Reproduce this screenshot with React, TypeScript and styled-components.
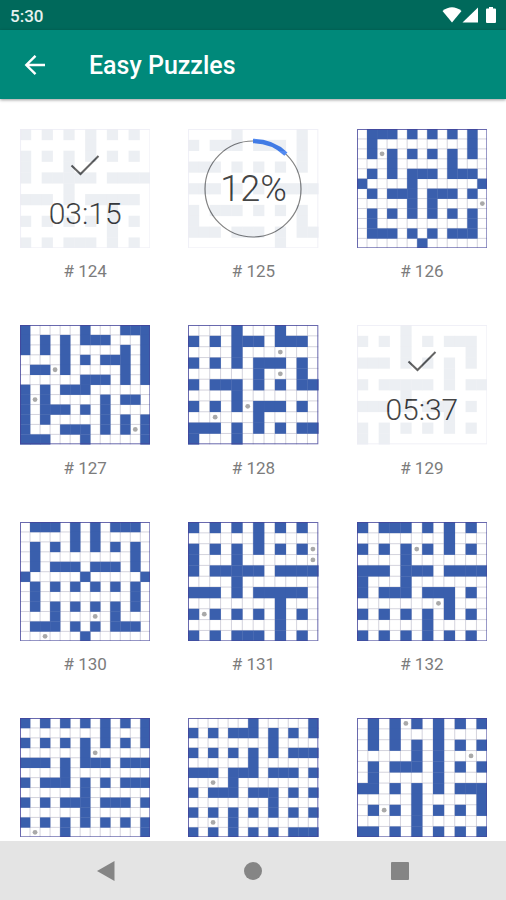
import React from "react";
import styled, { createGlobalStyle } from "styled-components";

const GlobalStyle = createGlobalStyle`
  * { box-sizing: border-box; }
  body { margin: 0; background: #fff; font-family: Roboto, "Open Sans", sans-serif; }
  button { font: inherit; border: 0; padding: 0; background: none; cursor: pointer; }
`;

const Screen = styled.div`
  display: flex;
  flex-direction: column;
  height: 100vh;
`;

const StatusBar = styled.div`
  display: flex;
  align-items: center;
  justify-content: space-between;
  flex: none;
  height: 30px;
  padding: 2px 8px 0 10px;
  background: #00695b;
  color: #e6f1ef;
  font-size: 17px;
  line-height: 28px;
  font-weight: 500;
`;

const StatusIcons = styled.div`
  display: flex;
  align-items: center;
`;

const AppBar = styled.header`
  display: flex;
  align-items: center;
  gap: 36px;
  flex: none;
  height: 69px;
  padding: 2px 17px 0;
  background: #00897a;
  color: #fff;
  box-shadow: 0 1px 3px rgba(0, 0, 0, 0.4);
  z-index: 1;
`;

const IconButton = styled.button`
  display: flex;
  align-items: center;
  justify-content: center;
  width: 36px;
  height: 36px;
  color: inherit;
`;

const Title = styled.h1`
  margin: 0;
  font-size: 25px;
  line-height: 32px;
  font-weight: 500;
`;

const PuzzleList = styled.main`
  flex: 1;
  min-height: 0;
  overflow-y: auto;
  scrollbar-width: none;
  display: grid;
  grid-template-columns: repeat(3, 1fr);
  align-content: start;
  row-gap: 44px;
  padding: 30px 0 30px 1px;
`;

const Card = styled.button`
  display: flex;
  flex-direction: column;
  gap: 13px;
  align-items: stretch;
  padding: 0 19px;
`;

const Thumb = styled.span`
  display: grid;
  > * { grid-area: 1 / 1; }
`;

const BoardSvg = styled.svg<{ $faded: boolean }>`
  display: block;
  width: 100%;
  opacity: ${(p) => (p.$faded ? 0.09 : 1)};
`;

const Overlay = styled.span`
  display: flex;
  flex-direction: column;
  align-items: center;
  justify-content: center;
  color: #333;
  font-size: 36px;
  line-height: 36px;
  font-weight: 300;
`;

const DoneOverlay = styled(Overlay)`
  gap: 20px;
  padding-top: 8px;
  font-size: 30px;
`;

const ProgressRing = styled.svg`
  display: block;
  place-self: center;
`;

const Caption = styled.span`
  color: #7c7c7c;
  font-size: 17px;
  line-height: 20px;
  text-align: center;
`;

const NavBar = styled.nav`
  display: grid;
  grid-template-columns: repeat(3, 1fr);
  justify-items: center;
  align-items: center;
  flex: none;
  height: 59px;
  padding: 0 33px;
  background: #e4e4e4;
  color: #858585;
`;

type Puzzle = { id: number; rows: string[]; time?: string; progress?: number };

const crossBoard = [
  "#.#.#.#.#.#.", "......#.....", "#.#.#.#.#.#o", "#...#......o",
  "#.#####.####", "....#.......", "###.#.#####.", "........#...",
  "#o#.#.#.#.#.", "........#...", "#.#.###.#.#.",
];

const puzzles: Puzzle[] = [
  { id: 124, time: "03:15", rows: crossBoard.map((r) => r.replace(/o/g, ".")) },
  { id: 125, progress: 12, rows: [
    "....#.....#.", "#.###.###.#.", "..........#.", "###.#.#.#.#.",
    "............", "###.#.#.####", "............", "#.###.#.#.#.",
    "#.........#.", "###.###.#.##", "........#...",
  ] },
  { id: 126, rows: [
    ".###.#.#.#.#.", ".#.........#.", ".#o#.#.#.#.#.", "...#.....#...",
    ".#.#.###.###.", "#....#......#", ".#.###.###.#.", ".....#.#....o",
    ".#.#.#.#.#.#.", ".#.........#.", ".###.#.#.###.", "......#......",
  ] },
  { id: 127, rows: [
    "#.....#...###", "#.#.#.###...#", "#.#.#.....#.#", "....#.#.###.#",
    ".##o#.....#.#", "......###.#.#", "#.#.###......", "#o#.....#.##.",
    "#.###.#.#....", "#.#.....#.#.#", "#...###.#.#o#", "###...#.....#",
  ] },
  { id: 128, rows: [
    "....#...#...", "#.#.###.###.", "....#...o...", "#.#.#.###.#.",
    "......#.o.#.", "#.###.#.#.##", "....#.......", "#.#.#o###.#.",
    "..o...#.....", "###.#.#.#.##", "#...#.......",
  ] },
  { id: 129, time: "05:37", rows: [
    "....#.......", "#.#.#.#.###.", "....#.....#.", "###.#.#.#.#.",
    "........#...", "#.#####.#.##", "....#.......", "###.#.###.#.",
    "........#...", "#.#.#.#.#.#.", "#.#.........",
  ] },
  { id: 130, rows: [
    ".###.#.#.###.", ".....#.#.....", ".#.#.#.#.#.#.", ".#.........#.",
    ".#.###.###.#.", "#.....#.....#", ".#.#.#.#.#.#.", ".#.........#.",
    ".#.#.#.#.#.#.", "...#...o.#...", ".###.#.#.###.", "..o...#......",
  ] },
  { id: 131, rows: crossBoard },
  { id: 132, rows: [
    "#.###.#.#.#.", "........#...", "#.#.#o#.#.#.", "....#.......",
    "###.###.####", "#...#.......", "#.###.###.#.", ".......o#...",
    "#.#.#.#.#.#.", "......#.....", "#.#.#.#.#.#.",
  ] },
  { id: 133, rows: [
    "#.#.#.#.#.#.#", "........#...#", "#.#.#.#.#.#.#", "......#o.....",
    "###.#.###.###", "....#........", "#.###.#.#.###", "......#......",
    "#.#.###.###.#", "......#......", "#.#.#.#.#.#.#", ".o..#.......#",
  ] },
  { id: 134, rows: [
    "......#.....#", "#.#.###.#.#.#", "........#....", "#.#.#.#.#.###",
    "......#......", "###.###.###.#", "..o.#........", "#.###.###.#.#",
    "........#....", "#.#.#.#.#.#.#", "..o.#........", "#.#.#.#.#.###",
  ] },
  { id: 135, rows: [
    ".#.#o#.#.#.#", ".#.#...#....", ".#.#.#.#.#.#", ".....#.#..o.",
    ".#.###.#.#.#", ".#.....#....", "##.#.#.#.###", ".....#.....#",
    ".#o#.#.#.#.#", ".....#......", "##.#.#.#.#.#",
  ] },
];

function Board({ rows, faded }: { rows: string[]; faded: boolean }) {
  const cols = rows[0].length;
  const w = 130 / cols;
  const h = 119 / rows.length;
  const blocks: React.ReactNode[] = [];
  const dots: React.ReactNode[] = [];
  rows.forEach((row, y) =>
    row.split("").forEach((cell, x) => {
      const key = `${x}-${y}`;
      if (cell === "#") {
        blocks.push(<rect key={key} x={x * w} y={y * h} width={w + 0.3} height={h + 0.3} />);
      } else if (cell === "o") {
        dots.push(<circle key={key} cx={(x + 0.5) * w} cy={(y + 0.5) * h} r="2.4" />);
      }
    })
  );
  const lines = [
    ...rows.slice(1).map((_, i) => `M0 ${(i + 1) * h}H130`),
    ...Array.from({ length: cols - 1 }, (_, i) => `M${(i + 1) * w} 0V119`),
  ].join("");
  return (
    <BoardSvg $faded={faded} viewBox="0 0 130 119" aria-hidden="true">
      <rect width="130" height="119" fill="#fff" />
      {!faded && <path d={lines} stroke="#c9c8d4" strokeWidth="0.8" />}
      <g fill={faded ? "#38557f" : "#3a5fad"}>{blocks}</g>
      <g fill="#a9a9a9">{dots}</g>
      <rect x="0.5" y="0.5" width="129" height="118" fill="none" stroke="#44449a" strokeOpacity="0.8" />
    </BoardSvg>
  );
}

function Progress({ value }: { value: number }) {
  const r = 48;
  const length = 2 * Math.PI * r;
  return (
    <ProgressRing width="102" height="102" viewBox="0 0 102 102" aria-hidden="true">
      <circle cx="51" cy="51" r={r} fill="none" stroke="#777" strokeWidth="1.2" />
      <circle
        cx="51" cy="51" r={r} fill="none" stroke="#4380f0" strokeWidth="4.5"
        strokeDasharray={`${(length * value) / 100} ${length}`}
        transform="rotate(-90 51 51)"
      />
    </ProgressRing>
  );
}

function PuzzleCard({ puzzle }: { puzzle: Puzzle }) {
  const { id, rows, time, progress } = puzzle;
  return (
    <Card type="button">
      <Thumb>
        <Board rows={rows} faded={Boolean(time || progress)} />
        {time && (
          <DoneOverlay>
            <svg width="30" height="22" viewBox="0 0 30 22" fill="none" stroke="#555" strokeWidth="2" aria-hidden="true">
              <path d="M1.5 11.5L10.5 20L28.5 2" />
            </svg>
            <span>{time}</span>
          </DoneOverlay>
        )}
        {progress && <Progress value={progress} />}
        {progress && <Overlay>{progress}%</Overlay>}
      </Thumb>
      <Caption># {id}</Caption>
    </Card>
  );
}

export default function App() {
  return (
    <Screen>
      <GlobalStyle />
      <StatusBar>
        <span>5:30</span>
        <StatusIcons>
          <svg width="56" height="18" viewBox="0 0 56 18" fill="#fff" aria-hidden="true">
            <path d="M0.5 4Q10 -3.500 19.5 4L10 15.500Z" />
            <path d="M36 0.500V15.500H20.5Z" />
            <path d="M47 0h4v1.500h2q1 0 1 1V15q0 1-1 1h-8q-1 0-1-1V2.500q0-1 1-1H47Z" />
          </svg>
        </StatusIcons>
      </StatusBar>
      <AppBar>
        <IconButton type="button" aria-label="Back">
          <svg width="22" height="22" viewBox="0 0 22 22" fill="none" stroke="#fff" strokeWidth="2.4" aria-hidden="true">
            <path d="M21 10H3M11.500 0.800L2.300 10L11.500 19.200" />
          </svg>
        </IconButton>
        <Title>Easy Puzzles</Title>
      </AppBar>
      <PuzzleList>
        {puzzles.map((p) => (
          <PuzzleCard key={p.id} puzzle={p} />
        ))}
      </PuzzleList>
      <NavBar>
        <IconButton type="button" aria-label="Back">
          <svg width="18" height="20" viewBox="0 0 18 20" fill="currentColor" aria-hidden="true">
            <path d="M17.500 0V20L0 10Z" />
          </svg>
        </IconButton>
        <IconButton type="button" aria-label="Home">
          <svg width="18" height="18" viewBox="0 0 18 18" fill="currentColor" aria-hidden="true">
            <circle cx="9" cy="9" r="9" />
          </svg>
        </IconButton>
        <IconButton type="button" aria-label="Recent apps">
          <svg width="18" height="18" viewBox="0 0 18 18" fill="currentColor" aria-hidden="true">
            <rect width="18" height="18" rx="1" />
          </svg>
        </IconButton>
      </NavBar>
    </Screen>
  );
}
